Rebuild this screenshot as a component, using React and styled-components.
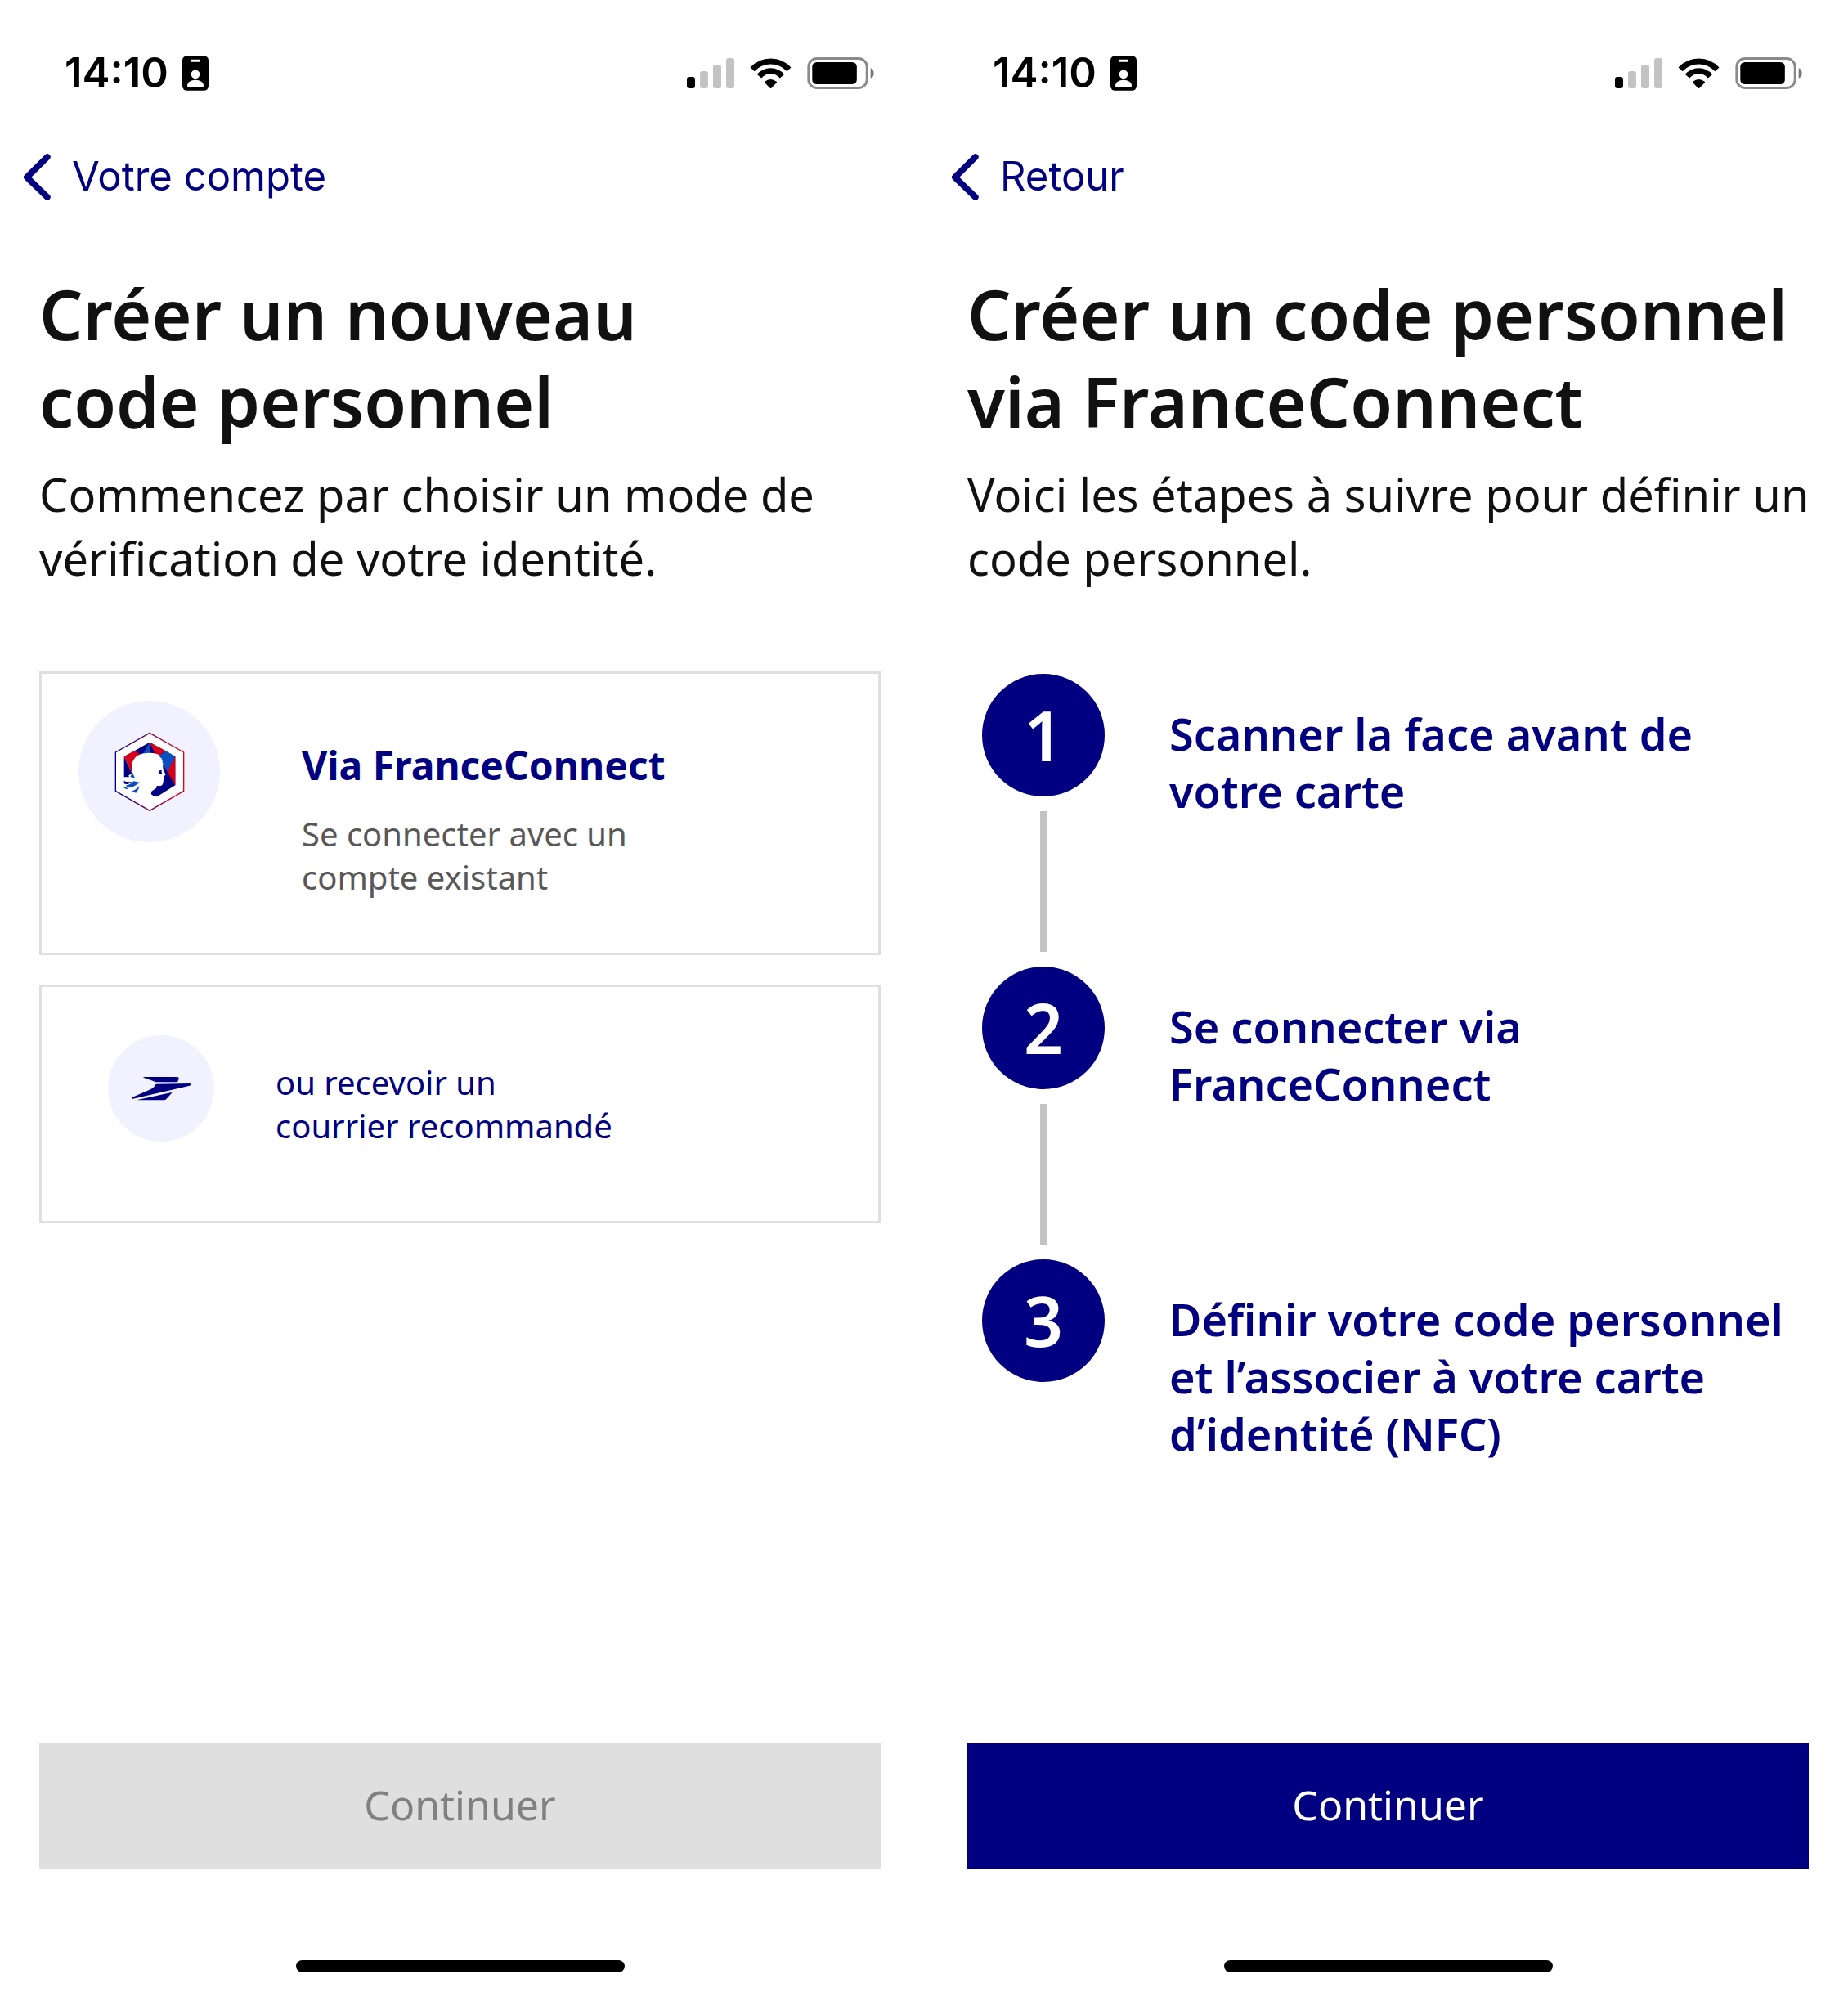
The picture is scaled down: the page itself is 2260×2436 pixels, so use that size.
import React from "react";
import styled, { createGlobalStyle } from "styled-components";

const navy = "#000080";
const ink = "#111111";
const marianne = '"Noto Sans", "Open Sans", sans-serif';
const system = 'Inter, "Liberation Sans", sans-serif';

const GlobalStyle = createGlobalStyle`
  *, *::before, *::after { box-sizing: border-box; }
  body { margin: 0; background: #ffffff; font-family: ${marianne}; color: ${ink}; }
  h1, p, ol { margin: 0; padding: 0; }
  svg { display: block; flex: none; }
`;

const Board = styled.main`
  display: grid;
  grid-template-columns: 1fr 1fr;
  gap: 10px;
  min-height: 100vh;
`;

const Screen = styled.section`
  display: flex;
  flex-direction: column;
  min-width: 0;
  padding: 59px 0 24px;
`;

const StatusBar = styled.div`
  display: flex;
  align-items: center;
  justify-content: space-between;
  padding: 0 56px 0 79px;
  color: #000000;
`;

const StatusGroup = styled.div`
  display: flex;
  align-items: center;
  gap: ${(p) => p.$gap}px;
`;

const Clock = styled.time`
  font: 600 51px/60px ${system};
`;

const BackLink = styled.a`
  display: flex;
  align-items: center;
  align-self: flex-start;
  gap: 26px;
  margin: 67px 0 84px 28px;
  color: ${navy};
  font: 400 49px/60px ${system};
  text-decoration: none;
`;

const Content = styled.div`
  display: flex;
  flex-direction: column;
  padding: 0 48px;
`;

const Title = styled.h1`
  font-size: 84px;
  font-weight: 600;
  line-height: 107px;
`;

const Lead = styled.p`
  margin: 21px -12px 0 0;
  font-size: 56px;
  line-height: 78px;
`;

const Options = styled.div`
  display: flex;
  flex-direction: column;
  gap: 36px;
  margin-top: 100px;
`;

const Option = styled.button`
  display: flex;
  align-items: flex-start;
  gap: ${(p) => (p.$compact ? 75 : 100)}px;
  width: 100%;
  padding: ${(p) => (p.$compact ? "59px 81px 90px" : "33px 45px 66px")};
  border: 3px solid #dfdfdf;
  background: #ffffff;
  font-family: inherit;
  text-align: left;
`;

const Badge = styled.span`
  display: flex;
  flex: none;
  align-items: center;
  justify-content: center;
  width: ${(p) => p.$size}px;
  height: ${(p) => p.$size}px;
  border-radius: 50%;
  background: #f1f1ff;
`;

const OptionText = styled.span`
  display: flex;
  flex-direction: column;
  gap: 27px;
  padding-top: ${(p) => (p.$compact ? 31 : 49)}px;
`;

const OptionName = styled.span`
  color: ${navy};
  font-size: 48px;
  font-weight: 700;
  line-height: 60px;
`;

const OptionDetail = styled.span`
  color: ${(p) => (p.$accent ? navy : "#585858")};
  font-size: 40px;
  line-height: 53px;
`;

const Steps = styled.ol`
  display: flex;
  flex-direction: column;
  margin-top: 103px;
  padding-left: 18px;
  list-style: none;
`;

const Step = styled.li`
  display: flex;
  gap: 79px;
`;

const Rail = styled.div`
  display: flex;
  flex: none;
  flex-direction: column;
  align-items: center;
`;

const StepNumber = styled.span`
  display: flex;
  align-items: center;
  justify-content: center;
  width: 150px;
  height: 150px;
  border-radius: 50%;
  background: ${navy};
  color: #ffffff;
  font-size: 84px;
  font-weight: 600;
  line-height: 1;
`;

const Connector = styled.span`
  flex: 1;
  width: 9px;
  min-height: 172px;
  margin: 18px 0;
  background: #c3c3c3;
`;

const StepText = styled.p`
  padding-top: 38px;
  color: ${navy};
  font-size: 54px;
  font-weight: 600;
  line-height: 70px;
`;

const Footer = styled.footer`
  display: flex;
  flex-direction: column;
  align-items: center;
  gap: 111px;
  margin-top: auto;
  padding: 0 48px;
`;

const ContinueButton = styled.button`
  width: 100%;
  height: 155px;
  padding: 0 0 4px;
  border: 0;
  background: ${navy};
  color: #ffffff;
  font: 400 50px/70px ${marianne};

  &:disabled {
    background: #dfdfdf;
    color: #808080;
  }
`;

const HomeIndicator = styled.div`
  width: 402px;
  height: 15px;
  border-radius: 8px;
  background: #000000;
`;

const IdCardIcon = () => (
  <svg width="32" height="43" viewBox="0 0 96 128" aria-hidden="true">
    <rect width="96" height="128" rx="17" fill="#000" />
    <rect x="30" y="14" width="36" height="9" rx="4" fill="#fff" />
    <circle cx="48" cy="68" r="16" fill="#fff" />
    <path d="M18 110c0-12 13-21 30-21s30 9 30 21c0 4-2 6-6 6H24c-4 0-6-2-6-6z" fill="#fff" />
  </svg>
);

const SignalIcon = () => (
  <svg width="58" height="37" viewBox="0 0 174 111" aria-hidden="true">
    <rect y="69" width="30" height="42" rx="9" fill="#000" />
    <rect x="48" y="48" width="30" height="63" rx="9" fill="#c3c3c3" />
    <rect x="96" y="24" width="30" height="87" rx="9" fill="#c3c3c3" />
    <rect x="144" width="30" height="111" rx="9" fill="#c3c3c3" />
  </svg>
);

const WifiIcon = () => (
  <svg width="51" height="37" viewBox="0 0 151 111" aria-hidden="true">
    <g fill="none" stroke="#000" strokeWidth="21">
      <path d="M8.3 41.6A91 91 0 0 1 142.7 41.6" />
      <path d="M33.7 66.8A55 55 0 0 1 117.3 66.8" />
    </g>
    <path d="M54 86q21-16 43 0 2 2 0 5L78 110q-2 2-5 0L54 91q-2-3 0-5z" fill="#000" />
  </svg>
);

const BatteryIcon = () => (
  <svg width="82" height="39" viewBox="0 0 246 118" aria-hidden="true">
    <rect x="4.5" y="4.5" width="216" height="109" rx="31" fill="none" stroke="#8a8a8a" strokeWidth="9" />
    <rect x="18" y="18" width="165" height="82" rx="17" fill="#000" />
    <path d="M234 40q12 5 12 19t-12 19z" fill="#777" />
  </svg>
);

const ChevronIcon = () => (
  <svg width="34" height="57" viewBox="0 0 101 171" aria-hidden="true">
    <path d="M89 12 14 86l75 73" fill="none" stroke={navy} strokeWidth="23" strokeLinecap="round" strokeLinejoin="round" />
  </svg>
);

const FranceConnectLogo = () => (
  <svg width="94" height="106" viewBox="0 0 282 318" aria-hidden="true">
    <defs>
      <linearGradient id="fc-edge" x1="0" x2="1" y1="0" y2="0">
        <stop offset="0" stopColor="#000091" />
        <stop offset="1" stopColor="#e1000f" />
      </linearGradient>
    </defs>
    <path d="M141 16 266 87v142l-125 72L16 229V87z" fill="#fff" stroke="url(#fc-edge)" strokeWidth="4" strokeLinejoin="round" />
    <path d="M141 50 85 82l30 30h50l20 40-20 66-17 12-2 12 3 5 19 3 67-42V102z" fill="#000080" />
    <path d="M47 102 80 172l-8 6H47z" fill="#000080" />
    <path d="M85 81 47 102l33 71 33-75z" fill="#d6001a" />
    <path d="M141 50 116 94h25z" fill="#0a4ec0" />
    <path d="M141 50 164 98h15l20-17z" fill="#d6001a" />
    <path d="M199 82 235 102 207 160 176 112l3-14z" fill="#0a4ec0" />
    <path d="M235 102v106l-29-50z" fill="#d6001a" />
    <path
      d="M78 166C68 118 88 92 130 90q34-3 50 10-4 4 1 7 7 0 4 6 6 4 2 9 4 3 3 9-1 6 0 12 0 8 4 15 7 9 5 12-2 3-5 3 2 3-1 6 2 3 0 6-2 3-2 12-2 10-9 13-10 0-20-1-14 4-17 20 0 9 3 13 6 6 18 6l-28 17-60-34-14-60z"
      fill="#fff"
    />
    <path d="M70 176q5-8 9-14 4 14 10 22-10-2-19-8z" fill="#0a4ec0" />
    <path d="M47 192q14 6 30 2l-14 9q-8 2-16-1z" fill="#000080" />
    <path d="M52 209q18-2 30-16l22 4q-16 16-38 20z" fill="#0a4ec0" />
    <path d="M47 212q8 6 18 7l-8 3q-6-2-10-4z" fill="#0a4ec0" />
    <path d="M74 230q16-4 30-20-2 14-13 26-8-4-17-6z" fill="#0a4ec0" />
    <path d="M172 157q8-5 15-4l-3 4q4 6 1 11-8 1-10-4 3-3 2-6z" fill="#000080" />
  </svg>
);

const PostLogo = () => (
  <svg width="84" height="50" viewBox="0 0 252 150" fill={navy} aria-hidden="true">
    <path d="M60 33h124q8 0 7 7l-3 8q-1 4-6 4h-74q-5 0-9-3L62 35z" />
    <path d="M106 60q1-1 4-1l122-2q2 0 2 2v3q0 2-3 3L20 114q-2 0-2-2v-3l64-28q20-9 24-21z" />
    <path d="M40 117 164 90q2 0 1 2l-19 21q-4 5-10 5H40z" />
  </svg>
);

function PhoneScreen({ back, title, lead, children, disabled }) {
  return (
    <Screen>
      <StatusBar>
        <StatusGroup $gap={17}>
          <Clock>14:10</Clock>
          <IdCardIcon />
        </StatusGroup>
        <StatusGroup $gap={19}>
          <SignalIcon />
          <WifiIcon />
          <BatteryIcon />
        </StatusGroup>
      </StatusBar>
      <BackLink href="#">
        <ChevronIcon />
        {back}
      </BackLink>
      <Content>
        <Title>{title}</Title>
        <Lead>{lead}</Lead>
        {children}
      </Content>
      <Footer>
        <ContinueButton type="button" disabled={disabled}>Continuer</ContinueButton>
        <HomeIndicator />
      </Footer>
    </Screen>
  );
}

const steps = [
  <>Scanner la face avant de<br />votre carte</>,
  <>Se connecter via<br />FranceConnect</>,
  <>Définir votre code personnel<br />et l’associer à votre carte<br />d’identité (NFC)</>,
];

export default function App() {
  return (
    <Board>
      <GlobalStyle />
      <PhoneScreen
        back="Votre compte"
        title={<>Créer un nouveau<br />code personnel</>}
        lead={<>Commencez par choisir un mode de<br />vérification de votre identité.</>}
        disabled
      >
        <Options>
          <Option type="button">
            <Badge $size={173}><FranceConnectLogo /></Badge>
            <OptionText>
              <OptionName>Via FranceConnect</OptionName>
              <OptionDetail>Se connecter avec un<br />compte existant</OptionDetail>
            </OptionText>
          </Option>
          <Option type="button" $compact>
            <Badge $size={130}><PostLogo /></Badge>
            <OptionText $compact>
              <OptionDetail $accent>ou recevoir un<br />courrier recommandé</OptionDetail>
            </OptionText>
          </Option>
        </Options>
      </PhoneScreen>
      <PhoneScreen
        back="Retour"
        title={<>Créer un code personnel<br />via FranceConnect</>}
        lead={<>Voici les étapes à suivre pour définir un<br />code personnel.</>}
      >
        <Steps>
          {steps.map((text, i) => (
            <Step key={i}>
              <Rail>
                <StepNumber>{i + 1}</StepNumber>
                {i < steps.length - 1 && <Connector />}
              </Rail>
              <StepText>{text}</StepText>
            </Step>
          ))}
        </Steps>
      </PhoneScreen>
    </Board>
  );
}
